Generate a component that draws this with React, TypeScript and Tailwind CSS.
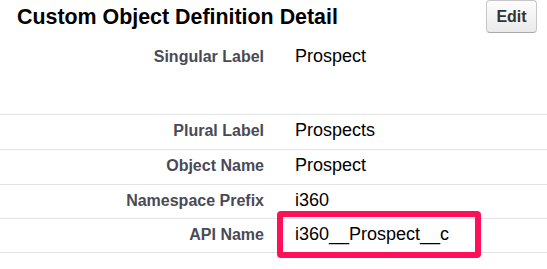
import React from 'react';

const rows = [
  { label: 'Singular Label', value: 'Prospect', h: 'h-[74px]' },
  { label: 'Plural Label', value: 'Prospects', h: 'h-[35px]' },
  { label: 'Object Name', value: 'Prospect', h: 'h-[35px]' },
  { label: 'Namespace Prefix', value: 'i360', h: 'h-[34px]' },
  { label: 'API Name', value: 'i360__Prospect__c', h: 'h-[34px]', highlight: true },
];

const App = () => {
  return (
    <div className="w-[547px] h-[269px] bg-white overflow-hidden font-['Liberation_Sans',Arial,sans-serif]">
      <div className="flex items-start justify-between h-[41px] pl-[17px] pr-[10px]">
        <h2 className="pt-[3px] text-[21.4px] leading-[28px] font-bold text-black">
          Custom Object Definition Detail
        </h2>
        <button className="h-[33px] w-[51px] rounded-[4px] border border-[#c6c6c6] border-b-[#a9a9a9] bg-gradient-to-b from-[#fdfdfd] to-[#eaeaea] text-[16px] font-bold text-[#333]">
          Edit
        </button>
      </div>

      {rows.map((row) => (
        <div
          key={row.label}
          className={`flex items-baseline gap-[31px] border-b border-[#e3e3e3] pt-[3px] ${row.h}`}
        >
          <div className="w-[264px] shrink-0 text-right text-[16px] leading-6 font-bold text-[#4a4a56]">
            {row.label}
          </div>
          <div className="relative text-[18px] leading-6 text-black">
            {row.value}
            {row.highlight && (
              <span className="absolute left-[-18px] top-[-11px] w-[204px] h-[47px] rounded-[4px] border-[6px] border-[#ff1058] pointer-events-none" />
            )}
          </div>
        </div>
      ))}
    </div>
  );
};

export default App;
